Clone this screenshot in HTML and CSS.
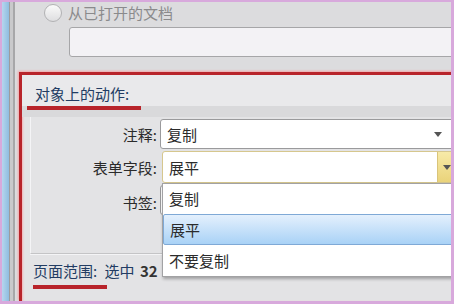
FILE: index.html
```html
<!DOCTYPE html>
<html>

<head>
  <title>对象上的动作</title>
  <link rel="stylesheet" href="styles.css">
</head>

<body>
  <div class="window">
    <div class="side-strip"></div>
    <div class="splitter"></div>

    <div class="main">
      <div class="open-doc">
        <span class="radio"></span>
        <span class="radio-label">从已打开的文档</span>
      </div>
      <div class="doc-input"></div>

      <div class="red-frame">
        <div class="group-header">
          <span class="mark">对象上的动作:</span>
        </div>

        <div class="group-box">
          <div class="field-label">注释:</div>
          <div class="combo">
            <span class="combo-text">复制</span>
            <span class="combo-arrow"></span>
          </div>

          <div class="field-label">表单字段:</div>
          <div class="combo combo-open">
            <span class="combo-text">展平</span>
            <span class="combo-button"><span class="combo-arrow"></span></span>
            <ul class="drop-list">
              <li>复制</li>
              <li class="selected">展平</li>
              <li>不要复制</li>
            </ul>
          </div>

          <div class="field-label label-low">书签:</div>
          <div class="combo"></div>
        </div>

        <div class="page-range">
          <span class="mark">页面范围:</span>
          <span class="range-value">选中</span>
          <b class="range-count">32</b>
        </div>
      </div>
    </div>
  </div>
</body>

</html>
```

FILE: styles.css
```css
html,
body {
  margin: 0;
  height: 100%;
}

body {
  font-family: "Noto Sans CJK SC", "Liberation Sans", sans-serif;
  font-size: 15px;
  color: #2b2b2b;
  background-color: #d8a9dc;
  padding: 2px 3px 3px 2px;
  box-sizing: border-box;
  overflow: hidden;
}

.window {
  display: flex;
  height: 100%;
}

.side-strip {
  width: 7px;
  background: linear-gradient(to right, #b6d6ee, #8fbde0);
}

.splitter {
  width: 6px;
  background-color: #c9c9cb;
  border-left: 1px solid #9c9c9e;
  border-right: 2px solid #a7a7a9;
  box-sizing: border-box;
}

.main {
  flex: 1;
  display: flex;
  flex-direction: column;
  background-color: #dcdcde;
  overflow: hidden;
}

.open-doc {
  display: flex;
  align-items: center;
  gap: 6px;
  height: 21px;
  padding-left: 29px;
  color: #8a8a8c;
}

.radio {
  width: 16px;
  height: 16px;
  border: 1px solid #b2b2b4;
  border-radius: 50%;
  background: linear-gradient(#fafafa, #dedee0);
}

.doc-input {
  height: 28px;
  margin: 4px -6px 0 54px;
  background-color: #f3f2f5;
  border: 1px solid #a6a6a8;
  border-radius: 3px;
}

.red-frame {
  flex: 1;
  display: flex;
  flex-direction: column;
  margin: 15px -6px 0 4px;
  border-top: 3px solid #b8242b;
  border-left: 3px solid #b8242b;
  box-shadow: -1px -1px 2px #f2a6a8, inset 1px 1px 2px #f2b4b6;
  background-color: #e3e3e5;
}

.group-header {
  height: 31px;
  padding-left: 5px;
  background-color: #e9e9eb;
  border-bottom: 11px solid #d9d9db;
  display: flex;
  align-items: flex-end;
}

.mark {
  display: inline-block;
  color: #223c63;
  padding: 0 12px 2px 8px;
  border-bottom: 4px solid #b8242b;
  line-height: 20px;
}

.group-header .mark {
  margin-bottom: -4px;
}

.group-box {
  display: grid;
  grid-template-columns: 126px 1fr;
  grid-template-rows: 30px 32px 30px;
  column-gap: 3px;
  row-gap: 2px;
  margin-left: 8px;
  padding: 2px 0 38px;
  border-left: 1px solid #f4f4f6;
  border-bottom: 1px solid #c4c4c6;
  box-shadow: 0 1px 0 #f4f4f6;
}

.field-label {
  display: flex;
  align-items: center;
  justify-content: flex-end;
}

.label-low {
  padding-top: 5px;
}

.combo {
  position: relative;
  display: flex;
  align-items: center;
  background-color: #fff;
  border: 1px solid #9a9a9c;
  border-radius: 3px 0 0 3px;
}

.combo-text {
  flex: 1;
  padding-left: 6px;
}

.combo-arrow {
  width: 0;
  height: 0;
  margin-right: 14px;
  border-left: 4px solid transparent;
  border-right: 4px solid transparent;
  border-top: 5px solid #555;
}

.combo-open {
  margin-left: 2px;
  border-color: #d6c78e;
}

.combo-button {
  align-self: stretch;
  display: flex;
  align-items: center;
  justify-content: center;
  width: 17px;
  margin-right: 1px;
  background: linear-gradient(#f7eaa8, #ead37a);
  border-left: 1px solid #d9c47a;
}

.combo-button .combo-arrow {
  margin-right: 0;
}

.drop-list {
  position: absolute;
  top: 31px;
  left: -1px;
  right: 2px;
  margin: 0;
  padding: 0;
  list-style: none;
  background-color: #fff;
  border: 1px solid #a2a2a4;
  box-shadow: 1px 2px 3px rgba(0, 0, 0, 0.3);
  z-index: 2;
}

.drop-list li {
  height: 31px;
  line-height: 31px;
  padding-left: 6px;
}

.drop-list li:first-child {
  height: 30px;
  line-height: 30px;
}

.drop-list .selected {
  margin: 0 -1px 0 0;
  height: 29px;
  line-height: 29px;
  background: linear-gradient(#e4f0fd, #a9d2f6);
  border: 1px solid #7fa9d6;
  border-radius: 2px;
}

.page-range {
  padding: 6px 0 0 11px;
  color: #223c63;
}

.page-range .mark {
  padding: 0 10px 4px 0;
  margin-right: -6px;
}

.range-count {
  color: #333;
  margin-left: 2px;
}
```
